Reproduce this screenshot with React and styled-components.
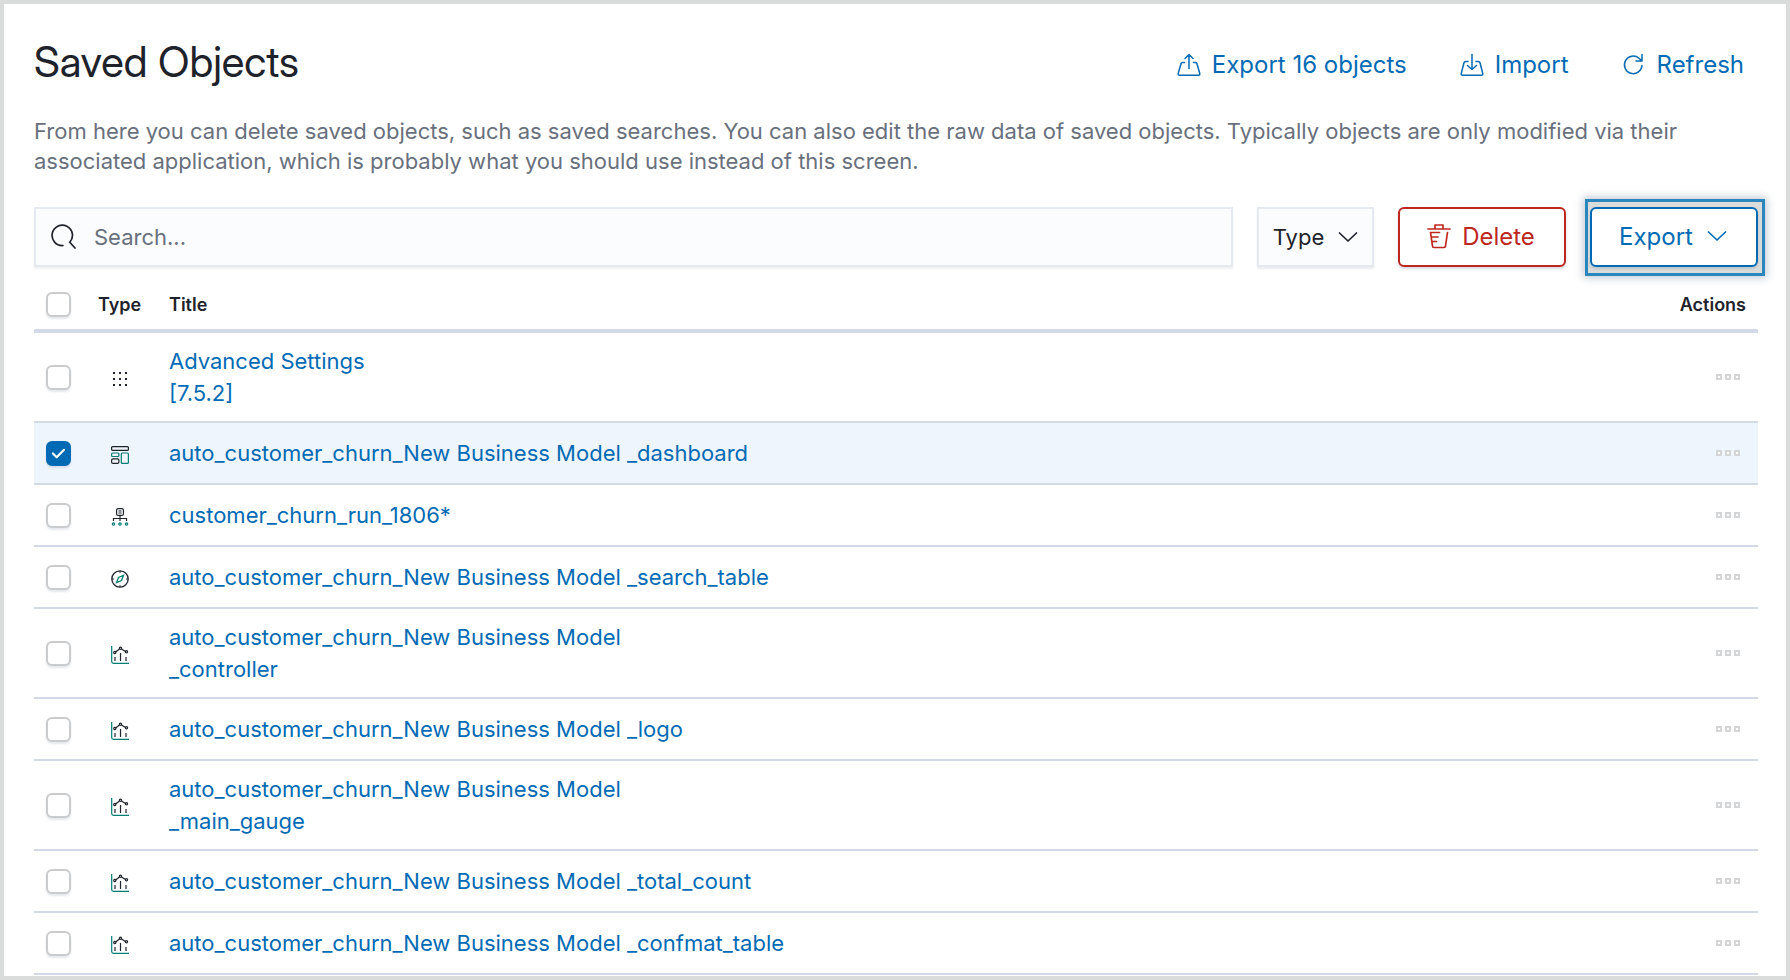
import React, { useState } from "react"
import styled, { createGlobalStyle, css } from "styled-components"

const colors = {
    frame: "#dadcdb",
    ink: "#1e222b",
    muted: "#69707d",
    blue: "#006bb4",
    red: "#bd271e",
    teal: "#017d73",
    line: "#d3dae6",
    field: "#fbfcfd",
    fieldLine: "#e5e9f0",
    selected: "#eef5fc",
    box: "#c9cbcd"
}

const GlobalStyle = createGlobalStyle`
    *, *::before, *::after {
        box-sizing: border-box;
    }

    body {
        margin: 0;
        color: ${colors.ink};
        background: #fff;
        font-family: Inter, "Liberation Sans", sans-serif;
    }

    button, input {
        font: inherit;
    }
`

const Page = styled.main`
    height: 100vh;
    overflow: hidden;
    padding: 34px 28px 0 30px;
    border: 4px solid ${colors.frame};
`

const Header = styled.header`
    display: flex;
    align-items: flex-end;
    justify-content: space-between;
`

const Title = styled.h1`
    margin: 0;
    font-family: "Inter Display", Inter, "Liberation Sans", sans-serif;
    font-size: 42px;
    font-weight: 400;
    line-height: 48px;
`

const HeaderActions = styled.nav`
    display: flex;
    gap: 53px;
    padding: 0 14px 5px 0;
`

const HeaderButton = styled.button`
    display: flex;
    align-items: center;
    gap: 11px;
    padding: 0;
    border: 0;
    background: none;
    color: ${colors.blue};
    font-size: 24px;
    line-height: 32px;
    cursor: pointer;
`

const Description = styled.p`
    margin: 30px 0 31px;
    color: ${colors.muted};
    font-size: 22px;
    line-height: 30px;
`

const Toolbar = styled.div`
    display: flex;
    gap: 24px;
    height: 60px;
    margin-bottom: 12px;
`

const SearchBox = styled.label`
    display: flex;
    flex: 1;
    align-items: center;
    gap: 17px;
    padding: 0 15px;
    border: 2px solid ${colors.fieldLine};
    background: ${colors.field};
    box-shadow: 0 2px 2px rgba(152, 162, 179, 0.15);
`

const SearchInput = styled.input`
    flex: 1;
    min-width: 0;
    padding: 0;
    border: 0;
    outline: 0;
    background: none;
    color: ${colors.ink};
    font-size: 22px;

    &::placeholder {
        color: ${colors.muted};
        opacity: 1;
    }
`

const FilterButton = styled.button`
    display: flex;
    align-items: center;
    justify-content: center;
    gap: 14px;
    width: 117px;
    padding: 0;
    border: 2px solid ${colors.fieldLine};
    background: ${colors.field};
    box-shadow: 0 2px 2px rgba(152, 162, 179, 0.2);
    color: ${colors.ink};
    font-size: 22px;
    cursor: pointer;
`

const ActionButton = styled.button`
    position: relative;
    display: flex;
    align-items: center;
    justify-content: center;
    gap: ${props => props.$danger ? "11px" : "14px"};
    width: 168px;
    padding: 0 2px 2px 0;
    border: 2px solid currentColor;
    border-radius: 6px;
    background: #fff;
    box-shadow: 0 2px 3px rgba(152, 162, 179, 0.4);
    color: ${props => props.$danger ? colors.red : colors.blue};
    font-size: 24px;
    cursor: pointer;
`

const Highlight = styled.div`
    position: relative;
    display: flex;

    &::before {
        content: "";
        position: absolute;
        inset: -8px -7px -9px -5px;
        border: 3px solid #2a87bd;
        background: ${colors.frame};
        box-shadow: 0 0 8px 2px rgba(105, 125, 150, 0.4);
    }
`

const Table = styled.table`
    width: 100%;
    border-spacing: 0;
    table-layout: fixed;
`

const HeadCell = styled.th`
    height: 54px;
    padding: 1px 12px 0;
    border-bottom: 4px solid ${colors.line};
    font-size: 18px;
    font-weight: 600;
    line-height: 24px;
    text-align: ${props => props.$align || "left"};
    width: ${props => props.$width || "auto"};
`

const Row = styled.tr`
    background: ${props => props.$selected ? colors.selected : "transparent"};
`

const Cell = styled.td`
    height: 62px;
    padding: 12px;
    border-bottom: 2px solid ${colors.line};
    font-size: 22px;
    line-height: 32px;
`

const ObjectLink = styled.a`
    color: ${colors.blue};
    text-decoration: none;
    white-space: pre-line;
`

const iconBlock = css`
    display: block;
    flex: none;
`

const Svg = styled.svg`
    ${iconBlock}
    fill: none;
    stroke: currentColor;
`

const TypeSvg = styled(Svg)`
    margin: 3px 0 0 13px;
`

const Checkbox = styled.input.attrs({ type: "checkbox" })`
    ${iconBlock}
    appearance: none;
    width: 25px;
    height: 25px;
    margin: 0;
    border: 2px solid ${colors.box};
    border-radius: 6px;
    background: #fff;
    box-shadow: 0 2px 2px rgba(152, 162, 179, 0.25);
    cursor: pointer;

    &:checked {
        border-color: ${colors.blue};
        background: ${colors.blue} url("data:image/svg+xml,%3Csvg xmlns='http://www.w3.org/2000/svg' viewBox='0 0 16 12' fill='none' stroke='white' stroke-width='2.4' stroke-linecap='round' stroke-linejoin='round'%3E%3Cpath d='M2 6l4 4 8-8'/%3E%3C/svg%3E") center / 15px 11px no-repeat;
    }
`

const MoreButton = styled.button`
    display: flex;
    gap: 3px;
    margin-left: auto;
    padding: 4px 6px;
    border: 0;
    background: none;
    cursor: pointer;
`

const Dot = styled.span`
    width: 6px;
    height: 6px;
    border: 2px solid #d3d5d7;
    background: #fff;
`

const ExportIcon = () => (
    <Svg width="24" height="24" viewBox="0 0 24 24" strokeWidth="1.5" strokeLinecap="round" strokeLinejoin="round">
        <path d="M7.5 9.5h-2a1.5 1.5 0 0 0-1.4 1l-2.900 10a1.300 1.300 0 0 0 1.300 1.700h19a1.300 1.300 0 0 0 1.300-1.700l-2.900-10a1.500 1.500 0 0 0-1.400-1h-2M12 15.500v-14M8 5.500l4-4 4 4" />
    </Svg>
)

const ImportIcon = () => (
    <Svg width="24" height="24" viewBox="0 0 24 24" strokeWidth="1.5" strokeLinecap="round" strokeLinejoin="round">
        <path d="M8 8.500H5.500a1.500 1.500 0 0 0-1.400 1l-2.900 11a1.300 1.300 0 0 0 1.300 1.700h19a1.300 1.300 0 0 0 1.300-1.700l-2.900-11a1.500 1.500 0 0 0-1.400-1H16M12 1.500v15M7.500 12.500l4.500 4 4.500-4" />
    </Svg>
)

const RefreshIcon = () => (
    <Svg width="24" height="24" viewBox="0 0 24 24" strokeWidth="1.5" strokeLinecap="round" strokeLinejoin="round">
        <path d="M20 12.500a8.800 8.800 0 1 1-3-7.300L20 8M20 1.500V8h-6" />
    </Svg>
)

const SearchIcon = () => (
    <Svg width="26" height="26" viewBox="0 0 26 26" strokeWidth="1.7" strokeLinecap="round">
        <path d="M12 21.500A10.200 10.200 0 1 1 18.800 18.200L24 24" />
    </Svg>
)

const ChevronIcon = () => (
    <Svg width="20" height="12" viewBox="0 0 20 12" strokeWidth="1.7" strokeLinecap="round" strokeLinejoin="round">
        <path d="M1.500 2l8.500 8 8.500-8" />
    </Svg>
)

const TrashIcon = () => (
    <Svg width="24" height="26" viewBox="0 0 24 26" strokeWidth="1.7" strokeLinecap="round" strokeLinejoin="round">
        <path d="M1 6h22M8 6V2h8v4M3.500 9.500l2 13.500a1.500 1.500 0 0 0 1.500 1.500h10a1.500 1.500 0 0 0 1.500-1.500l2-13.500M4 9.500h8.500M5 14h6M5.500 18.500h4" />
    </Svg>
)

const AppsIcon = () => (
    <TypeSvg width="18" height="18" viewBox="0 0 18 18">
        {[2, 8, 14].map(y => [2, 8, 14].map(x => <rect key={`${x}-${y}`} x={x} y={y} width="2" height="2" fill={colors.ink} stroke="none" />))}
    </TypeSvg>
)

const DashboardIcon = () => (
    <TypeSvg width="18" height="18" viewBox="0 0 18 18" strokeWidth="1.2">
        <rect x="0.6" y="0.6" width="16.8" height="3.8" rx="1" />
        <rect x="0.6" y="12.8" width="7.3" height="4.6" rx="1.5" />
        <rect x="0.6" y="7" width="7.3" height="3.5" rx="1" stroke={colors.teal} />
        <rect x="10.3" y="7" width="7.1" height="10.4" rx="1" stroke={colors.teal} />
    </TypeSvg>
)

const IndexPatternIcon = () => (
    <TypeSvg width="18" height="18" viewBox="0 0 18 18" strokeWidth="1.2">
        <rect x="5.6" y="0.6" width="6.8" height="6.8" rx="1.5" />
        <path d="M7.500 3h3M7.500 5h3M9 7.500V13M2.500 13v-2.500h13V13" />
        <g stroke={colors.teal}>
            <circle cx="2.5" cy="16" r="1.2" />
            <circle cx="9" cy="16" r="1.2" />
            <circle cx="15.5" cy="16" r="1.2" />
        </g>
    </TypeSvg>
)

const SearchTypeIcon = () => (
    <TypeSvg width="18" height="18" viewBox="0 0 18 18" strokeWidth="1.3">
        <circle cx="9" cy="9" r="8.2" />
        <path d="M9 1v2M9 15v2M1 9h2M15 9h2" strokeWidth="1" />
        <path d="M12.500 5.500l-2 5-5 2 2-5z" stroke={colors.teal} />
    </TypeSvg>
)

const VisualizationIcon = () => (
    <TypeSvg width="18" height="18" viewBox="0 0 18 18" strokeWidth="1.2">
        <path d="M0.700 0v15.500a1.800 1.800 0 0 0 1.800 1.800H18" stroke={colors.teal} />
        <path d="M4 11v4M9.500 7v8M15 11v4" />
        <path d="M4.500 6l4-3M10.500 3l4 2.500" />
        <circle cx="3.8" cy="6.5" r="1.1" />
        <circle cx="9.5" cy="2.3" r="1.1" />
        <circle cx="15.5" cy="5.8" r="1.1" />
    </TypeSvg>
)

const typeIcons = {
    config: AppsIcon,
    dashboard: DashboardIcon,
    "index-pattern": IndexPatternIcon,
    search: SearchTypeIcon,
    visualization: VisualizationIcon
}

const savedObjects = [
    { id: 1, type: "config", title: "Advanced Settings\n[7.5.2]" },
    { id: 2, type: "dashboard", title: "auto_customer_churn_New Business Model _dashboard" },
    { id: 3, type: "index-pattern", title: "customer_churn_run_1806*" },
    { id: 4, type: "search", title: "auto_customer_churn_New Business Model _search_table" },
    { id: 5, type: "visualization", title: "auto_customer_churn_New Business Model\n_controller" },
    { id: 6, type: "visualization", title: "auto_customer_churn_New Business Model _logo" },
    { id: 7, type: "visualization", title: "auto_customer_churn_New Business Model\n_main_gauge" },
    { id: 8, type: "visualization", title: "auto_customer_churn_New Business Model _total_count" },
    { id: 9, type: "visualization", title: "auto_customer_churn_New Business Model _confmat_table" }
]

const ObjectRow = ({ item, selected, onToggle }) => {
    const Icon = typeIcons[item.type]
    return (
        <Row $selected={selected}>
            <Cell><Checkbox aria-label={`Select ${item.title}`} checked={selected} onChange={onToggle} /></Cell>
            <Cell><Icon /></Cell>
            <Cell><ObjectLink href="#">{item.title}</ObjectLink></Cell>
            <Cell>
                <MoreButton aria-label="Actions">
                    <Dot />
                    <Dot />
                    <Dot />
                </MoreButton>
            </Cell>
        </Row>
    )
}

const App = () => {
    const [selected, setSelected] = useState([2])
    const [query, setQuery] = useState("")
    const allSelected = selected.length === savedObjects.length

    const toggle = id => setSelected(prev => prev.includes(id) ? prev.filter(other => other !== id) : [...prev, id])
    const toggleAll = () => setSelected(allSelected ? [] : savedObjects.map(item => item.id))

    return (
        <Page>
            <GlobalStyle />
            <Header>
                <Title>Saved Objects</Title>
                <HeaderActions>
                    <HeaderButton><ExportIcon />Export 16 objects</HeaderButton>
                    <HeaderButton><ImportIcon />Import</HeaderButton>
                    <HeaderButton><RefreshIcon />Refresh</HeaderButton>
                </HeaderActions>
            </Header>
            <Description>
                From here you can delete saved objects, such as saved searches. You can also edit the raw data of saved objects. Typically objects are only modified via their associated application, which is probably what you should use instead of this screen.
            </Description>
            <Toolbar>
                <SearchBox>
                    <SearchIcon />
                    <SearchInput aria-label="Search" placeholder="Search..." value={query} onChange={ev => setQuery(ev.target.value)} />
                </SearchBox>
                <FilterButton>Type<ChevronIcon /></FilterButton>
                <ActionButton $danger><TrashIcon />Delete</ActionButton>
                <Highlight>
                    <ActionButton>Export<ChevronIcon /></ActionButton>
                </Highlight>
            </Toolbar>
            <Table>
                <thead>
                    <tr>
                        <HeadCell $width="52px"><Checkbox aria-label="Select all" checked={allSelected} onChange={toggleAll} /></HeadCell>
                        <HeadCell $width="71px">Type</HeadCell>
                        <HeadCell>Title</HeadCell>
                        <HeadCell $width="120px" $align="right">Actions</HeadCell>
                    </tr>
                </thead>
                <tbody>
                    {savedObjects.map(item => (
                        <ObjectRow key={item.id} item={item} selected={selected.includes(item.id)} onToggle={() => toggle(item.id)} />
                    ))}
                </tbody>
            </Table>
        </Page>
    )
}

export default App
